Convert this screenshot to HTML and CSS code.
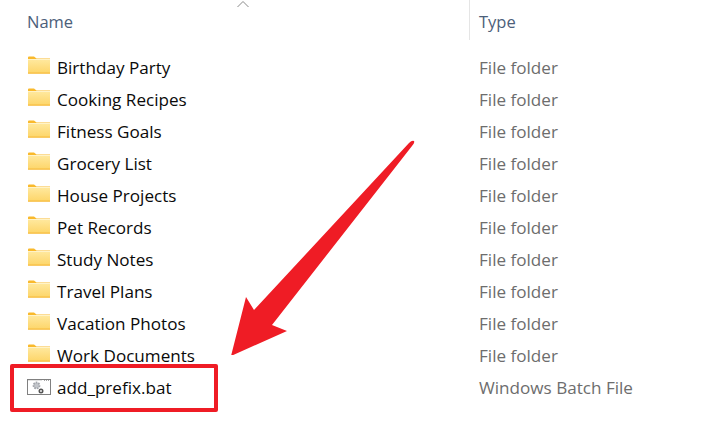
FILE: index.html
```html
<!DOCTYPE html>
<html lang="en">
<head>
<meta charset="utf-8">
<title>Explorer</title>
<link rel="stylesheet" href="styles.css">
</head>
<body>
<svg width="0" height="0" class="defs">
  <defs>
    <linearGradient id="fg" x1="0" y1="0" x2="0" y2="1">
      <stop offset="0" stop-color="#ffe9a0"/>
      <stop offset="1" stop-color="#fdd568"/>
    </linearGradient>
    <symbol id="folder" viewBox="0 0 22 18">
      <path d="M0 1.5 Q0 .5 1 .5 H6 L8.5 2.5 H22 V4 H0Z" fill="#f9b92c"/>
      <rect x="0" y="3" width="22" height="14.5" fill="url(#fg)"/>
      <rect x="0" y="3" width="22" height="1" fill="#fff3c8"/>
      <rect x="0" y="16.6" width="22" height="1" fill="#f5b533"/>
    </symbol>
  </defs>
</svg>
<main class="list">
  <header class="head">
    <div class="col-name">Name</div>
    <div class="col-type">Type</div>
  </header>
  <ul class="rows">
    <li class="row"><span class="name"><svg class="ico"><use href="#folder"/></svg>Birthday Party</span><span class="type">File folder</span></li>
    <li class="row"><span class="name"><svg class="ico"><use href="#folder"/></svg>Cooking Recipes</span><span class="type">File folder</span></li>
    <li class="row"><span class="name"><svg class="ico"><use href="#folder"/></svg>Fitness Goals</span><span class="type">File folder</span></li>
    <li class="row"><span class="name"><svg class="ico"><use href="#folder"/></svg>Grocery List</span><span class="type">File folder</span></li>
    <li class="row"><span class="name"><svg class="ico"><use href="#folder"/></svg>House Projects</span><span class="type">File folder</span></li>
    <li class="row"><span class="name"><svg class="ico"><use href="#folder"/></svg>Pet Records</span><span class="type">File folder</span></li>
    <li class="row"><span class="name"><svg class="ico"><use href="#folder"/></svg>Study Notes</span><span class="type">File folder</span></li>
    <li class="row"><span class="name"><svg class="ico"><use href="#folder"/></svg>Travel Plans</span><span class="type">File folder</span></li>
    <li class="row"><span class="name"><svg class="ico"><use href="#folder"/></svg>Vacation Photos</span><span class="type">File folder</span></li>
    <li class="row"><span class="name"><svg class="ico"><use href="#folder"/></svg>Work Documents</span><span class="type">File folder</span></li>
    <li class="row"><span class="name"><svg class="ico-bat" viewBox="0 0 24 16">
      <rect x=".5" y=".5" width="23" height="15" fill="#fff" stroke="#808080"/>
      <path d="M1 1.5 H15" stroke="#e2e2e2"/>
      <path d="M17 1.5 H23" stroke="#a8a8a8" stroke-dasharray="1 1"/>
      <circle cx="9.5" cy="6.5" r="3" fill="#c2c5ca" stroke="#a2a5ab" stroke-width="1.8" stroke-dasharray="1.6 1"/>
      <circle cx="14" cy="12" r="1.7" fill="#fff" stroke="#555" stroke-width="1.6"/>
    </svg>add_prefix.bat</span><span class="type">Windows Batch File</span></li>
  </ul>
</main>
<svg class="caret" width="14" height="8" viewBox="0 0 14 8"><path d="M1.5 7 L7 1.5 L12.5 7" fill="none" stroke="#8a8a8a" stroke-width="1"/></svg>
<svg class="arrow" width="190" height="220" viewBox="225 135 190 220"><path d="M414 141 Q412 140 409 143 L254 310 L246 297 L231 356 L287 331 L272 325 L412 146 Q415 143 414 141Z" fill="#ef1c25"/></svg>
<div class="box"></div>
</body>
</html>
```
FILE: styles.css
```css
* { box-sizing: border-box; }
html, body { margin: 0; padding: 0; }
body {
  position: relative;
  width: 727px;
  height: 422px;
  overflow: hidden;
  background: #fff;
  font-family: "Open Sans", "Noto Sans", sans-serif;
  font-size: 17.1px;
}
.defs { position: absolute; }
.head {
  display: grid;
  grid-template-columns: 469px 1fr;
  height: 40px;
  color: #4c607a;
  font-size: 16.5px;
}
.col-name { padding: 9px 0 0 27px; line-height: 25px; }
.col-type { padding: 9px 0 0 9px; line-height: 25px; border-left: 1px solid #e5e5e5; }
.rows { list-style: none; margin: 12px 0 0; padding: 0; }
.row {
  display: grid;
  grid-template-columns: 479px 1fr;
  height: 32px;
  align-items: center;
  line-height: 32px;
}
.name { display: flex; align-items: center; padding-left: 28px; color: #0a0a0a; }
.ico { width: 22px; height: 18px; margin-right: 7px; position: relative; top: -3px; flex: none; }
.ico-bat { width: 24px; height: 16px; margin: 0 6px 0 -1px; position: relative; top: -1px; flex: none; }
.type { color: #6d6d6d; }
.caret { position: absolute; left: 236px; top: 0; }
.arrow { position: absolute; left: 225px; top: 135px; }
.box {
  position: absolute;
  left: 10px;
  top: 364px;
  width: 208px;
  height: 48px;
  border: 4px solid #ef1c25;
  border-radius: 2px;
}
```
